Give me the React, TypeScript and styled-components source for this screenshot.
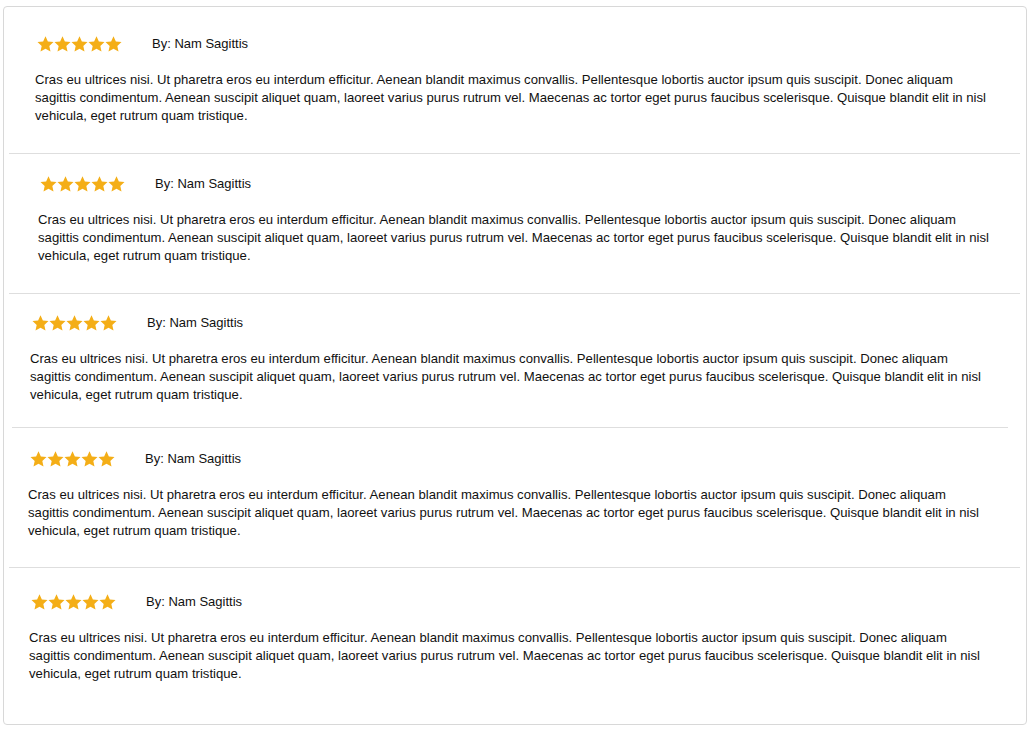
import React from "react";
import styled, { createGlobalStyle } from "styled-components";

const Global = createGlobalStyle`
  html, body { margin: 0; padding: 0; background: #ffffff; }
  body { font-family: "Liberation Sans", Arial, sans-serif; }
`;

const Card = styled.div`
  box-sizing: border-box;
  margin: 6px 0 0 3px;
  width: 1024px;
  height: 719px;
  border: 1px solid #d8d8d8;
  border-radius: 4px;
  background: #fff;
  display: flex;
  flex-direction: column;
`;

const Review = styled.section<{ $indent: number; $top: number; $bottom: number }>`
  padding: ${(p) => p.$top}px 0 ${(p) => p.$bottom}px ${(p) => p.$indent}px;
`;

const Header = styled.div`
  display: flex;
  align-items: center;
  height: 20px;
  padding-left: 2px;
`;

const Stars = styled.div`
  display: flex;
  gap: 0;
  width: 85px;
  margin-right: 30px;
`;

const Author = styled.span`
  font-size: 13px;
  color: #111;
  margin-top: -2px;
`;

const Body = styled.p`
  margin: 17px 0 0;
  width: 955px;
  font-size: 13.15px;
  line-height: 18px;
  color: #111;
`;

const Divider = styled.hr<{ $left: number; $right: number }>`
  margin: 0 ${(p) => p.$right}px 0 ${(p) => p.$left}px;
  border: 0;
  border-top: 1px solid #dedede;
  height: 0;
`;

const Star = () => (
  <svg width="17" height="16" viewBox="0 0 24 23">
    <polygon
      points="12,0.5 15.4,7.9 23.5,8.8 17.5,14.3 19.2,22.3 12,18.2 4.8,22.3 6.5,14.3 0.5,8.8 8.6,7.9"
      fill="#f4ae17"
    />
  </svg>
);

const TEXT =
  "Cras eu ultrices nisi. Ut pharetra eros eu interdum efficitur. Aenean blandit maximus convallis. Pellentesque lobortis auctor ipsum quis suscipit. Donec aliquam sagittis condimentum. Aenean suscipit aliquet quam, laoreet varius purus rutrum vel. Maecenas ac tortor eget purus faucibus scelerisque. Quisque blandit elit in nisl vehicula, eget rutrum quam tristique.";

const reviews = [
  { indent: 31, top: 27, bottom: 28, div: { left: 5, right: 6 } },
  { indent: 34, top: 20, bottom: 28, div: { left: 5, right: 6 } },
  { indent: 26, top: 19, bottom: 23, div: { left: 8, right: 18 } },
  { indent: 24, top: 21, bottom: 27, div: { left: 5, right: 6 } },
  { indent: 25, top: 24, bottom: 0, div: null },
];

export default function App() {
  return (
    <>
      <Global />
      <Card>
        {reviews.map((r, i) => (
          <React.Fragment key={i}>
            <Review $indent={r.indent} $top={r.top} $bottom={r.bottom}>
              <Header>
                <Stars>
                  {[0, 1, 2, 3, 4].map((s) => (
                    <Star key={s} />
                  ))}
                </Stars>
                <Author>By: Nam Sagittis</Author>
              </Header>
              <Body>{TEXT}</Body>
            </Review>
            {r.div && <Divider $left={r.div.left} $right={r.div.right} />}
          </React.Fragment>
        ))}
      </Card>
    </>
  );
}
